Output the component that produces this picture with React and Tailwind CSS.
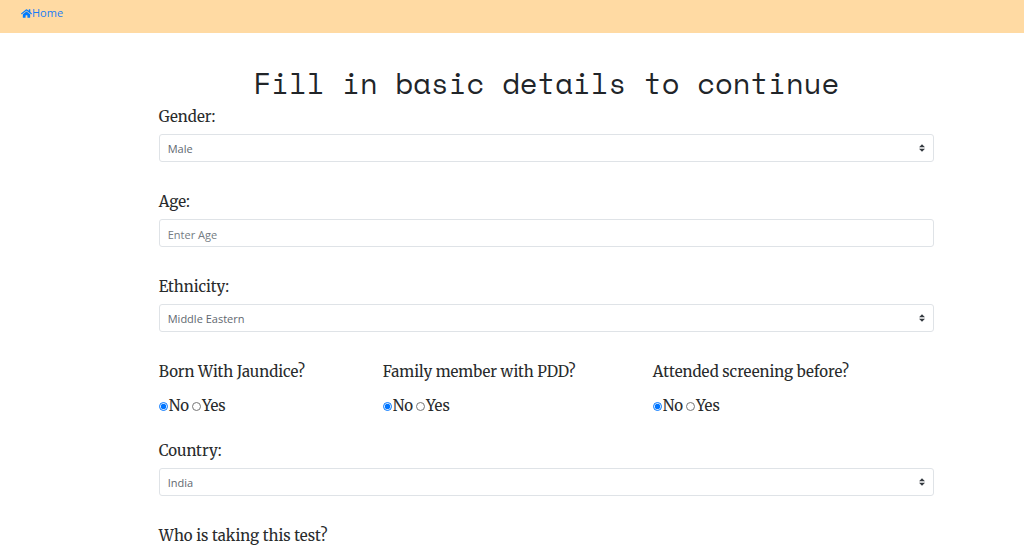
import React from 'react';
import { FaHome } from 'react-icons/fa';

const labelClass = "text-[15px] leading-6 text-[#292b2c]";
const controlClass =
  "block h-7 w-full appearance-none rounded-[3px] border border-[#dfe3e7] bg-white px-2 pt-[3px] text-[11px] font-['Open_Sans',sans-serif]";

function SelectField({ id, label, options }) {
  return (
    <div className="mb-7 flex flex-col gap-[5px]">
      <label htmlFor={id} className={labelClass}>{label}</label>
      <div className="relative">
        <select id={id} className={`${controlClass} text-[#5f6870]`}>
          {options.map((option) => (
            <option key={option}>{option}</option>
          ))}
        </select>
        <svg
          viewBox="0 0 4 5"
          className="pointer-events-none absolute top-1/2 right-[9px] h-2 w-1.5 -translate-y-1/2"
          aria-hidden="true"
        >
          <path fill="#343a40" d="M2 0L0 2h4zm0 5L0 3h4z" />
        </svg>
      </div>
    </div>
  );
}

function Choice({ name, value, checked }) {
  return (
    <label className="flex items-center">
      <input
        type="radio"
        name={name}
        value={value}
        defaultChecked={checked}
        className="mr-px size-[9px] accent-[#0075ff]"
      />
      {value}
    </label>
  );
}

function RadioField({ name, label }) {
  return (
    <fieldset className={labelClass}>
      <legend className="mb-2.5 whitespace-nowrap">{label}</legend>
      <div className="flex gap-[3px]">
        <Choice name={name} value="No" checked />
        <Choice name={name} value="Yes" />
      </div>
    </fieldset>
  );
}

export default function App() {
  return (
    <div className="h-screen overflow-hidden bg-white font-['Merriweather','Liberation_Serif',serif]">
      <nav className="flex h-[33px] items-start bg-[#ffdaa3] px-[21px] pt-1 text-[11px] leading-[18px] font-['Open_Sans',sans-serif]">
        <a href="#home" className="flex items-center text-[#1a7cf5]">
          <FaHome className="size-[11px] text-[#007bff]" />
          Home
        </a>
      </nav>
      <main className="mr-[8.8%] ml-[15.5%] pt-8">
        <h1 className="mb-1 text-center text-[29px] leading-9 text-[#212529] font-['Space_Mono','Liberation_Mono',monospace]">
          Fill in basic details to continue
        </h1>
        <form>
          <SelectField id="gender" label="Gender:" options={['Male', 'Female']} />
          <div className="mb-7 flex flex-col gap-[5px]">
            <label htmlFor="age" className={labelClass}>Age:</label>
            <input
              id="age"
              type="text"
              inputMode="numeric"
              placeholder="Enter Age"
              className={`${controlClass} placeholder:text-[#747c83]`}
            />
          </div>
          <SelectField id="ethnicity" label="Ethnicity:" options={['Middle Eastern', 'Asian', 'Black', 'Latino', 'White European']} />
          <div className="mb-[21px] grid grid-cols-[224fr_270fr_281fr]">
            <RadioField name="jaundice" label="Born With Jaundice?" />
            <RadioField name="pdd" label="Family member with PDD?" />
            <RadioField name="screening" label="Attended screening before?" />
          </div>
          <SelectField id="country" label="Country:" options={['India', 'Australia', 'United Kingdom', 'United States']} />
          <SelectField id="relation" label="Who is taking this test?" options={['Self', 'Parent', 'Relative']} />
        </form>
      </main>
    </div>
  );
}
